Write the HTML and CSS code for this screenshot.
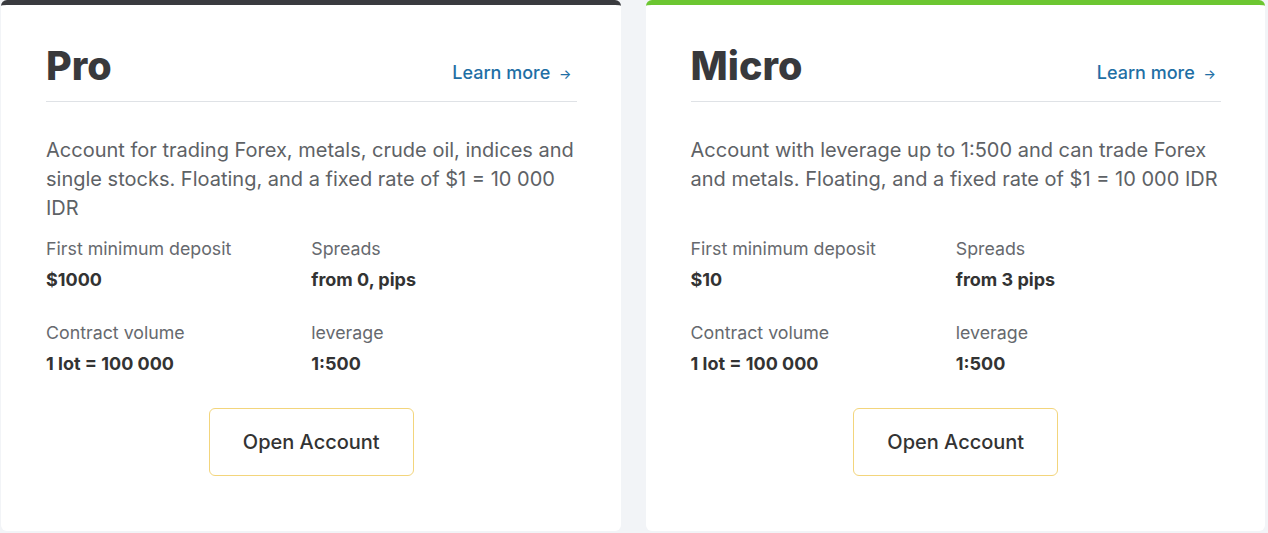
FILE: index.html
```html
<!DOCTYPE html>
<html lang="en">
<head>
<meta charset="UTF-8" />
<meta name="viewport" content="width=device-width, initial-scale=1" />
<title>Account types</title>
<link rel="stylesheet" href="styles.css">
</head>
<body>

<div class="accounts">
  <section class="account account--pro">
    <div class="account-head">
      <h2>Pro</h2>
      <a href="#" class="learn-more">Learn more <span class="arrow">→</span></a>
    </div>
    <p class="account-desc">Account for trading Forex, metals, crude oil, indices and single stocks. Floating, and a fixed rate of $1 = 10 000 IDR</p>
    <div class="specs">
      <div class="spec">
        <span class="spec-label">First minimum deposit</span>
        <strong class="spec-value">$1000</strong>
      </div>
      <div class="spec">
        <span class="spec-label">Spreads</span>
        <strong class="spec-value">from 0, pips</strong>
      </div>
      <div class="spec">
        <span class="spec-label">Contract volume</span>
        <strong class="spec-value">1 lot = 100 000</strong>
      </div>
      <div class="spec">
        <span class="spec-label">leverage</span>
        <strong class="spec-value">1:500</strong>
      </div>
    </div>
    <div class="account-action">
      <button class="open-btn">Open Account</button>
    </div>
  </section>

  <section class="account account--micro">
    <div class="account-head">
      <h2>Micro</h2>
      <a href="#" class="learn-more">Learn more <span class="arrow">→</span></a>
    </div>
    <p class="account-desc">Account with leverage up to 1:500 and can trade Forex and metals. Floating, and a fixed rate of $1 = 10 000 IDR</p>
    <div class="specs">
      <div class="spec">
        <span class="spec-label">First minimum deposit</span>
        <strong class="spec-value">$10</strong>
      </div>
      <div class="spec">
        <span class="spec-label">Spreads</span>
        <strong class="spec-value">from 3 pips</strong>
      </div>
      <div class="spec">
        <span class="spec-label">Contract volume</span>
        <strong class="spec-value">1 lot = 100 000</strong>
      </div>
      <div class="spec">
        <span class="spec-label">leverage</span>
        <strong class="spec-value">1:500</strong>
      </div>
    </div>
    <div class="account-action">
      <button class="open-btn">Open Account</button>
    </div>
  </section>
</div>

</body>
</html>
```

FILE: styles.css
```css
body {
  margin: 0;
  font-family: Inter, "Noto Sans", sans-serif;
  background: #f2f4f7;
  color: #333;
}

.accounts {
  display: flex;
  gap: 25px;
  padding: 0 3px 2px 1px;
  height: 531px;
}

.account {
  flex: 1 1 0;
  background: #fff;
  border-top: 5px solid #3a3b3f;
  border-radius: 6px;
  padding: 0 44px 0 45px;
  display: flex;
  flex-direction: column;
}
.account--micro {
  border-top-color: #6cc631;
}

.account-head {
  display: flex;
  justify-content: space-between;
  align-items: flex-end;
  padding-top: 38px;
  padding-bottom: 12px;
  border-bottom: 1px solid #dfe2e6;
}
.account-head h2 {
  margin: 0;
  font-size: 39.5px;
  line-height: 46px;
  font-weight: 800;
  color: #38393c;
}

.learn-more {
  color: #1f6fa5;
  text-decoration: none;
  font-size: 18px;
  font-weight: 500;
  margin-right: 5px;
  margin-bottom: 6px;
}
.learn-more .arrow {
  font-size: 13px;
  margin-left: 4px;
}

.account-desc {
  margin: 34px 0 0;
  min-height: 87px;
  font-size: 20px;
  line-height: 29px;
  color: #5e6266;
}

.specs {
  display: grid;
  grid-template-columns: 1fr 1fr;
  row-gap: 29px;
  margin-top: 14px;
}
.spec {
  display: flex;
  flex-direction: column;
  gap: 7px;
}
.spec-label {
  font-size: 17.8px;
  line-height: 24px;
  color: #66696e;
}
.spec-value {
  font-size: 18px;
  line-height: 24px;
  font-weight: 700;
  color: #333;
}

.account-action {
  display: flex;
  justify-content: center;
  margin-top: 32px;
}
.open-btn {
  width: 205px;
  height: 68px;
  background: #fff;
  border: 1px solid #f3d57c;
  border-radius: 6px;
  font-family: inherit;
  font-size: 20px;
  font-weight: 500;
  color: #333;
  cursor: pointer;
}
```
